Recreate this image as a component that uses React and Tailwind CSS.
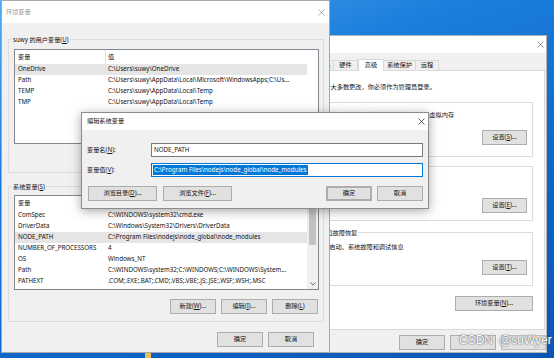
import React from "react";

const Btn = ({ className = "", children }) => (
  <div
    className={`flex items-center justify-center h-[15px] bg-[#e1e1e1] border border-[#adadad] whitespace-nowrap text-[6.2px] leading-none ${className}`}
  >
    {children}
  </div>
);

const Group = ({ label, className = "", labelClass = "", children }) => (
  <div className={`relative border border-[#dcdcdc] ${className}`}>
    {label && (
      <span
        className={`absolute -top-[5px] left-[3px] px-[1px] leading-[9px] whitespace-nowrap ${labelClass}`}
      >
        {label}
      </span>
    )}
    {children}
  </div>
);

const Row = ({ name, value, selected }) => (
  <div
    className={`flex h-[11px] items-center whitespace-nowrap ${
      selected ? "bg-[#e5e5e5]" : ""
    }`}
  >
    <div className="w-[91px] pl-[3px] overflow-hidden">{name}</div>
    <div className="flex-1 pl-[2px] overflow-hidden">{value}</div>
  </div>
);

const VarList = ({ rows, scroll, className = "" }) => (
  <div
    className={`flex border border-[#828790] bg-white text-[#111] ${className}`}
  >
    <div className="flex flex-col w-[292px]">
      <div className="flex h-[14px] items-center">
        <div className="w-[91px] h-full flex items-center pl-[3px] border-r border-[#e5e5e5]">
          变量
        </div>
        <div className="flex-1 pl-[2px]">值</div>
      </div>
      {rows.map((r) => (
        <Row key={r[0]} name={r[0]} value={r[1]} selected={r[2]} />
      ))}
    </div>
    {scroll && (
      <div className="flex flex-col w-[11px] ml-auto bg-[#f0f0f0]">
        <div className="h-[11px] flex items-center justify-center">
          <svg width="6" height="4" viewBox="0 0 6 4">
            <path d="M0.5 3.5 L3 1 L5.5 3.5" fill="none" stroke="#606060" strokeWidth="0.9" />
          </svg>
        </div>
        <div className="mx-[2px] h-[38px] bg-[#c2c2c2]" />
        <div className="flex-1" />
        <div className="h-[11px] flex items-center justify-center">
          <svg width="6" height="4" viewBox="0 0 6 4">
            <path d="M0.5 0.5 L3 3 L5.5 0.5" fill="none" stroke="#606060" strokeWidth="0.9" />
          </svg>
        </div>
      </div>
    )}
  </div>
);

const Close = ({ className = "" }) => (
  <svg width="7" height="7" viewBox="0 0 7 7" className={className}>
    <path d="M0.5 0.5 L6.5 6.5 M6.5 0.5 L0.5 6.5" stroke="currentColor" strokeWidth="0.8" />
  </svg>
);

function SysProps() {
  return (
    <div className="absolute z-0 isolate left-[300px] top-[35px] w-[247px] h-[318px] bg-[#f0f0f0] border border-[#b5b5b5] flex flex-col">
      <div className="h-[17px] bg-white flex items-center justify-end pr-[2px] text-[#777]">
        <Close />
      </div>
      <div className="flex items-end pl-[2px] mt-[5px] h-[12px] relative z-10">
        <div className="w-[31px] h-[10px] border border-b-0 border-[#d9d9d9] flex items-center justify-center">计算机名</div>
        <div className="w-[24px] h-[10px] border border-b-0 border-l-0 border-[#d9d9d9] flex items-center justify-center">硬件</div>
        <div className="w-[26px] h-[12px] border border-b-0 border-[#d9d9d9] bg-white flex items-center justify-center -mb-[1px] pb-[1px]">高级</div>
        <div className="w-[32px] h-[10px] border border-b-0 border-l-0 border-[#d9d9d9] flex items-center justify-center">系统保护</div>
        <div className="w-[23px] h-[10px] border border-b-0 border-l-0 border-[#d9d9d9] flex items-center justify-center">远程</div>
      </div>
      <div className="ml-[2px] w-[242px] h-[260px] bg-white border border-[#d9d9d9] flex flex-col pl-[5px]">
        <div className="mt-[11px] ml-[3px] h-[9px] leading-[9px] whitespace-nowrap">要进行大多数更改，你必须作为管理员登录。</div>
        <Group label="性能" labelClass="bg-white" className="mt-[11px] w-[224px] h-[55px] flex flex-col">
          <div className="mt-[7px] ml-[8px] leading-[9px] whitespace-nowrap">视觉效果，处理器计划，内存使用，以及虚拟内存</div>
          <Btn className="w-[45px] ml-auto mr-[5px] mt-[11px]">设置(<u>S</u>)...</Btn>
        </Group>
        <Group label="用户配置文件" labelClass="bg-white" className="mt-[9px] w-[224px] h-[55px] flex flex-col">
          <div className="mt-[7px] ml-[6px] leading-[9px] whitespace-nowrap">与登录帐户相关的桌面设置</div>
          <Btn className="w-[45px] ml-auto mr-[5px] mt-[15px]">设置(<u>E</u>)...</Btn>
        </Group>
        <Group label="启动和故障恢复" labelClass="bg-white" className="mt-[11px] w-[224px] h-[54px] flex flex-col">
          <div className="mt-[9px] ml-[7px] leading-[9px] whitespace-nowrap">系统启动、系统故障和调试信息</div>
          <Btn className="w-[45px] ml-auto mr-[5px] mt-[9px]">设置(<u>T</u>)...</Btn>
        </Group>
        <Btn className="w-[78px] ml-[146px] mt-[10px]">环境变量(<u>N</u>)...</Btn>
      </div>
      <div className="flex gap-[5px] ml-[98px] mt-[5px]">
        <Btn className="w-[46px]">确定</Btn>
        <Btn className="w-[46px]" />
        <Btn className="w-[45px] border-[#bfbfbf] bg-[#cccccc]" />
      </div>
    </div>
  );
}

const userRows = [
  ["OneDrive", "C:\\Users\\suwy\\OneDrive", true],
  ["Path", "C:\\Users\\suwy\\AppData\\Local\\Microsoft\\WindowsApps;C:\\Us..."],
  ["TEMP", "C:\\Users\\suwy\\AppData\\Local\\Temp"],
  ["TMP", "C:\\Users\\suwy\\AppData\\Local\\Temp"],
];

const sysRows = [
  ["ComSpec", "C:\\WINDOWS\\system32\\cmd.exe"],
  ["DriverData", "C:\\Windows\\System32\\Drivers\\DriverData"],
  ["NODE_PATH", "C:\\Program Files\\nodejs\\node_global\\node_modules", true],
  ["NUMBER_OF_PROCESSORS", "4"],
  ["OS", "Windows_NT"],
  ["Path", "C:\\WINDOWS\\system32;C:\\WINDOWS;C:\\WINDOWS\\System..."],
  ["PATHEXT", ".COM;.EXE;.BAT;.CMD;.VBS;.VBE;.JS;.JSE;.WSF;.WSH;.MSC"],
];

function EnvWindow() {
  return (
    <div className="absolute z-10 left-[1px] top-0 w-[329px] h-[353px] bg-[#f0f0f0] border border-[#a8a8a8] flex flex-col">
      <div className="h-[22px] bg-white flex items-center justify-between pl-[4px] pr-[4px] text-[#999]">
        <span>环境变量</span>
        <Close />
      </div>
      <Group
        label={<>suwy 的用户变量(<u>U</u>)</>}
        labelClass="bg-[#f0f0f0]"
        className="mt-[16px] ml-[6px] w-[316px] h-[134px] flex flex-col"
      >
        <VarList rows={userRows} className="mt-[9px] ml-[5px] w-[305px] h-[95px]" />
        <div className="flex gap-[5px] ml-[161px] mt-[7px]">
          <Btn className="w-[46px]">新建(<u>N</u>)...</Btn>
          <Btn className="w-[46px]">编辑(<u>E</u>)...</Btn>
          <Btn className="w-[46px]">删除(<u>D</u>)</Btn>
        </div>
      </Group>
      <Group
        label={<>系统变量(<u>S</u>)</>}
        labelClass="bg-[#f0f0f0]"
        className="mt-[13px] ml-[6px] w-[316px] h-[136px] flex flex-col"
      >
        <VarList rows={sysRows} scroll className="mt-[8px] ml-[5px] w-[305px] h-[95px]" />
        <div className="flex gap-[5px] ml-[161px] mt-[9px]">
          <Btn className="w-[46px]">新建(<u>W</u>)...</Btn>
          <Btn className="w-[46px]">编辑(<u>I</u>)...</Btn>
          <Btn className="w-[46px]">删除(<u>L</u>)</Btn>
        </div>
      </Group>
      <div className="flex gap-[5px] ml-[215px] mt-[10px]">
        <Btn className="w-[46px]">确定</Btn>
        <Btn className="w-[46px]">取消</Btn>
      </div>
    </div>
  );
}

function EditWindow() {
  return (
    <div className="absolute z-20 left-[81px] top-[112px] w-[348px] h-[97px] bg-[#f0f0f0] border border-[#8c8c8c] shadow-[0_2px_10px_rgba(0,0,0,0.35)] flex flex-col">
      <div className="h-[17px] bg-white flex items-center justify-between pl-[5px] pr-[3px]">
        <span>编辑系统变量</span>
        <Close className="text-[#333]" />
      </div>
      <div className="flex items-center mt-[13px] ml-[5px]">
        <div className="w-[64px]">变量名(<u>N</u>):</div>
        <div className="w-[272px] h-[14px] bg-white border border-[#7a7a7a] flex items-center pl-[2px]">NODE_PATH</div>
      </div>
      <div className="flex items-center mt-[6px] ml-[5px]">
        <div className="w-[64px]">变量值(<u>V</u>):</div>
        <div className="w-[272px] h-[14px] bg-white border border-[#0078d7] flex items-center pl-[1px]">
          <span className="bg-[#0078d7] text-white h-[10px] leading-[10px] px-[1px] whitespace-nowrap">
            C:\Program Files\nodejs\node_global\node_modules
          </span>
        </div>
      </div>
      <div className="flex items-center mt-[9px] ml-[6px]">
        <Btn className="w-[69px]">浏览目录(<u>D</u>)...</Btn>
        <Btn className="w-[69px] ml-[6px]">浏览文件(<u>F</u>)...</Btn>
        <Btn className="w-[46px] ml-[94px] border-[#0078d7] border-2">确定</Btn>
        <Btn className="w-[46px] ml-[5px]">取消</Btn>
      </div>
    </div>
  );
}

export default function App() {
  return (
    <div className="relative w-[554px] h-[358px] overflow-hidden bg-[linear-gradient(160deg,#55aaf0_0%,#1b7fdc_30%,#0d63c6_70%,#0a56b4_100%)] font-['Noto_Sans','Noto_Sans_CJK_SC',sans-serif] text-[6.2px] leading-none text-[#111]">
      <SysProps />
      <EnvWindow />
      <EditWindow />
      <div className="absolute z-0 left-[145px] top-[353px] w-[6px] h-[5px] bg-[#e8c35a]" />
      <div className="absolute z-30 left-[459px] top-[333px] flex items-baseline gap-[6px] text-[12px] leading-[14px] font-['Liberation_Sans',sans-serif] text-white [text-shadow:0_0_1px_#555,0_0_2px_#777]">
        <span>CSDN</span>
        <span>@suWyer</span>
      </div>
    </div>
  );
}
